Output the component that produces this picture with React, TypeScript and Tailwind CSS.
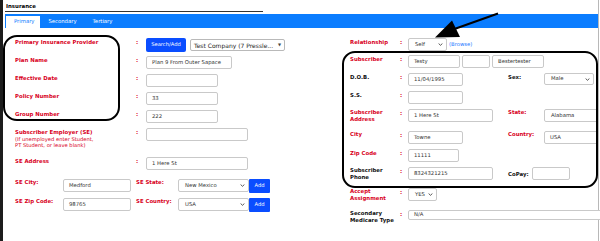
import type { ReactNode } from "react";

const LABEL = "whitespace-nowrap text-[5.4px] font-bold leading-[8px] text-[#d8001c]";
const LABEL_DARK = "whitespace-nowrap text-[5.4px] font-bold leading-[8px] text-[#111]";
const LABEL2 = "whitespace-nowrap text-[5.4px] font-bold leading-[7px] text-[#d8001c]";
const LABEL2_DARK = "whitespace-nowrap text-[5.4px] font-bold leading-[7px] text-[#111]";

function Chevron() {
  return (
    <svg width="5" height="3" viewBox="0 0 5 3" className="shrink-0">
      <path d="M0.6 0.5 L2.5 2.3 L4.4 0.5" fill="none" stroke="#444" strokeWidth="0.9" />
    </svg>
  );
}

function Field({ className, children }: { className: string; children?: ReactNode }) {
  return (
    <div
      className={`flex shrink-0 items-center overflow-hidden whitespace-nowrap rounded-[2px] border border-[#c9c9c9] bg-white px-[5px] text-[5.3px] text-[#333] ${className}`}
    >
      {children}
    </div>
  );
}

function Select({ className, value }: { className: string; value: string }) {
  return (
    <div
      className={`flex shrink-0 items-center justify-between overflow-hidden whitespace-nowrap rounded-[2px] border border-[#c9c9c9] bg-white pl-[6px] pr-[3px] text-[5.3px] text-[#333] ${className}`}
    >
      <span>{value}</span>
      <Chevron />
    </div>
  );
}

function Colon({ className = "w-[10px]" }: { className?: string }) {
  return (
    <span className={`shrink-0 text-[5.4px] font-bold leading-[8px] text-[#d8001c] ${className}`}>:</span>
  );
}

function AddButton() {
  return (
    <button
      type="button"
      className="h-[14px] w-[21px] shrink-0 rounded-[1px] bg-[#0a4dff] text-[5.2px] text-white"
    >
      Add
    </button>
  );
}

const leftLabels = ["Primary Insurance Provider", "Plan Name", "Effective Date", "Policy Number", "Group Number"];

export default function App() {
  return (
    <div className="relative h-[241px] w-[600px] overflow-hidden bg-white font-['DejaVu_Sans',sans-serif]">
      <div className="h-full w-[599px] border-l-[3px] border-r border-l-[#1c1c1c] border-r-[#b8b8b8]">
        <div className="pl-[3px] pt-[2px] text-[5.4px] font-bold leading-[8px] text-black">Insurance</div>
        <div className="ml-[2px] mt-px h-px w-[258px] bg-[#333]" />

        <div className="ml-[2px] mt-[2px] flex h-[14px] items-end bg-[#0b7dff]">
          <div className="ml-px flex h-[12px] items-center bg-white pl-[8px] pr-[6px] text-[5.3px] text-[#0b7dff]">
            Primary
          </div>
          <div className="flex h-[12px] items-center px-[8px] text-[5.3px] text-white">Secondary</div>
          <div className="flex h-[12px] items-center px-[8px] text-[5.3px] text-white">Tertiary</div>
        </div>

        <div className="flex">
          {/* left column */}
          <div className="w-[339px] shrink-0">
            <div className="flex">
              <div className="mt-[7px] flex w-[117px] flex-col gap-[10px] self-start rounded-[14px] border-2 border-black pb-px pl-[10px] pt-px">
                {leftLabels.map((l) => (
                  <div key={l} className={LABEL}>
                    {l}
                  </div>
                ))}
              </div>
              <div className="ml-[16px] mt-[10px] flex flex-col">
                <div className="flex h-[18px]">
                  <Colon />
                  <div className="flex items-start gap-[4px]">
                    <button
                      type="button"
                      className="h-[14px] w-[40px] rounded-[2px] bg-[#0a4dff] text-[5.2px] text-white"
                    >
                      Search/Add
                    </button>
                    <div className="mt-px flex h-[12px] w-[95px] items-center justify-between rounded-[2px] border border-[#b9b9b9] bg-white pl-[3px] pr-[3px] text-[6px] text-[#222]">
                      <span className="whitespace-nowrap">Test Company (7 Pressle...</span>
                      <span className="text-[4px] text-[#444]">▼</span>
                    </div>
                  </div>
                </div>
                <div className="flex h-[18px]">
                  <Colon />
                  <Field className="h-[13px] w-[86px]">Plan 9 From Outer Sapace</Field>
                </div>
                <div className="flex h-[18px]">
                  <Colon />
                  <Field className="h-[13px] w-[72px]" />
                </div>
                <div className="flex h-[18px]">
                  <Colon />
                  <Field className="h-[13px] w-[72px]">33</Field>
                </div>
                <div className="flex h-[18px]">
                  <Colon />
                  <Field className="h-[13px] w-[72px]">222</Field>
                </div>
              </div>
            </div>

            <div className="flex h-[29px]">
              <div className="w-[133px] shrink-0 pl-[12px]">
                <div className={LABEL}>Subscriber Employer (SE)</div>
                <div className="whitespace-nowrap text-[5.2px] leading-[6px] text-[#d8001c]">
                  (If unemployed enter Student,
                  <br />
                  PT Student, or leave blank)
                </div>
              </div>
              <Colon />
              <Field className="h-[13px] w-[102px]" />
            </div>

            <div className="flex h-[22px]">
              <div className={`w-[133px] shrink-0 pl-[12px] ${LABEL}`}>SE Address</div>
              <Colon />
              <Field className="h-[13px] w-[102px]">1 Here St</Field>
            </div>

            <div className="flex h-[19px] items-start">
              <div className="w-[60px] shrink-0 whitespace-nowrap pl-[12px] text-[5.4px] font-bold leading-[6px] text-[#d8001c]">
                SE City:
              </div>
              <Field className="h-[13px] w-[68px]">Medford</Field>
              <div className="ml-[5px] w-[42px] shrink-0 whitespace-nowrap text-[5.4px] font-bold leading-[6px] text-[#d8001c]">
                SE State:
              </div>
              <Select className="h-[13px] w-[71px]" value="New Mexico" />
              <AddButton />
            </div>

            <div className="flex h-[19px] items-start">
              <div className="w-[60px] shrink-0 whitespace-nowrap pl-[12px] text-[5.4px] font-bold leading-[6px] text-[#d8001c]">
                SE Zip Code:
              </div>
              <Field className="h-[13px] w-[68px]">98765</Field>
              <div className="ml-[5px] w-[42px] shrink-0 whitespace-nowrap text-[5.4px] font-bold leading-[6px] text-[#d8001c]">
                SE Country:
              </div>
              <Select className="h-[13px] w-[71px]" value="USA" />
              <AddButton />
            </div>
          </div>

          {/* right column */}
          <div className="min-w-0 flex-1">
            <div className="mt-[10px] flex h-[13px] items-start pl-[8px]">
              <div className={`w-[50px] ${LABEL}`}>Relationship</div>
              <Colon className="w-[8px]" />
              <Select className="h-[13px] w-[39px]" value="Self" />
              <span className="ml-[2px] self-center whitespace-nowrap text-[5.3px] text-[#1f7bff]">(Browse)</span>
            </div>

            <div className="overflow-hidden rounded-[13px] border-2 border-black pb-[5px] pl-[6px] pt-[2px]">
              <div className="flex h-[18px] items-start">
                <div className={`w-[50px] shrink-0 ${LABEL}`}>Subscriber</div>
                <Colon className="w-[8px]" />
                <div className="flex gap-[2px]">
                  <Field className="h-[13px] w-[52px]">Testy</Field>
                  <Field className="h-[13px] w-[28px]" />
                  <Field className="h-[13px] w-[52px]">Bestertester</Field>
                </div>
              </div>

              <div className="flex h-[18px] items-start">
                <div className={`w-[50px] shrink-0 ${LABEL_DARK}`}>D.O.B.</div>
                <Colon className="w-[8px]" />
                <div className="w-[100px] shrink-0">
                  <Field className="h-[13px] w-[55px]">11/04/1995</Field>
                </div>
                <div className={`w-[36px] shrink-0 ${LABEL_DARK}`}>Sex:</div>
                <Select className="h-[12px] w-[50px]" value="Male" />
              </div>

              <div className="flex h-[18px] items-start">
                <div className={`w-[50px] shrink-0 ${LABEL_DARK}`}>S.S.</div>
                <Colon className="w-[8px]" />
                <Field className="h-[13px] w-[55px]" />
              </div>

              <div className="flex h-[22px] items-start">
                <div className={`w-[50px] shrink-0 ${LABEL2}`}>
                  Subscriber
                  <br />
                  Address
                </div>
                <Colon className="w-[8px]" />
                <div className="w-[100px] shrink-0">
                  <Field className="h-[13px] w-[85px]">1 Here St</Field>
                </div>
                <div className={`w-[36px] shrink-0 ${LABEL2}`}>State:</div>
                <Select className="h-[13px] w-[70px]" value="Alabama" />
              </div>

              <div className="flex h-[18px] items-start">
                <div className={`w-[50px] shrink-0 ${LABEL2}`}>City</div>
                <Colon className="w-[8px]" />
                <div className="w-[100px] shrink-0">
                  <Field className="h-[13px] w-[55px]">Towne</Field>
                </div>
                <div className={`w-[36px] shrink-0 ${LABEL2}`}>Country:</div>
                <Field className="h-[13px] w-[70px]">USA</Field>
              </div>

              <div className="flex h-[18px] items-start">
                <div className={`w-[50px] shrink-0 ${LABEL}`}>Zip Code</div>
                <Colon className="w-[8px]" />
                <Field className="h-[13px] w-[51px]">11111</Field>
              </div>

              <div className="flex h-[14px] items-start">
                <div className={`w-[50px] shrink-0 ${LABEL2_DARK}`}>
                  Subscriber
                  <br />
                  Phone
                </div>
                <Colon className="w-[8px]" />
                <div className="w-[100px] shrink-0">
                  <Field className="h-[13px] w-[85px]">8324321215</Field>
                </div>
                <div className={`w-[24px] shrink-0 self-center ${LABEL2_DARK}`}>CoPay:</div>
                <Field className="h-[13px] w-[38px]" />
              </div>
            </div>

            <div className="flex h-[22px] items-start pl-[8px]">
              <div className={`w-[50px] shrink-0 ${LABEL2}`}>
                Accept
                <br />
                Assignment
              </div>
              <Colon className="w-[8px] leading-[7px]" />
              <Select className="h-[13px] w-[29px]" value="YES" />
            </div>

            <div className="flex items-start pl-[8px]">
              <div className={`w-[50px] shrink-0 ${LABEL2_DARK}`}>
                Secondary
                <br />
                Medicare Type
              </div>
              <Colon className="w-[8px]" />
              <Field className="h-[10px] w-[200px]">N/A</Field>
            </div>
          </div>
        </div>
      </div>

      {/* annotation arrow */}
      <svg
        className="pointer-events-none absolute left-0 top-0"
        width="600"
        height="241"
        viewBox="0 0 600 241"
      >
        <line x1="498" y1="13.5" x2="453" y2="29.5" stroke="black" strokeWidth="2" />
        <polygon points="435,37.5 452,20.5 460,37" fill="black" />
      </svg>
    </div>
  );
}
